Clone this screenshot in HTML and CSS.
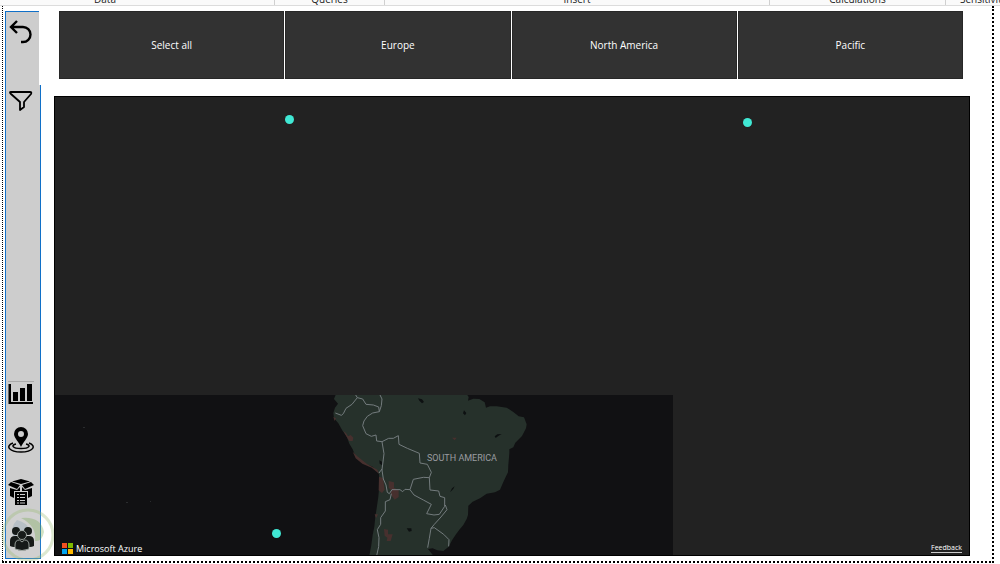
FILE: index.html
```html
<!DOCTYPE html>
<html lang="en">
  <head>
    <meta charset="UTF-8" />
    <meta name="viewport" content="width=device-width, initial-scale=1" />
    <title>Sales map report</title>
    <link rel="stylesheet" href="styles.css">
  </head>
  <body>
    <header class="ribbon">
      <span class="group group-data">Data</span>
      <span class="group">Queries</span>
      <span class="group">Insert</span>
      <span class="group">Calculations</span>
      <span class="group group-sens">Sensitivity</span>
    </header>

    <div class="report">
      <nav class="sidebar">
        <div class="side-top">
          <button class="icon-btn" aria-label="Back">
            <svg width="26" height="26" viewBox="0 0 26 26" fill="none" stroke="#000" stroke-width="2.4">
              <path d="M10 2 4 8l6 6M4 8h12a7 7 0 0 1 0 15h-2" />
            </svg>
          </button>
        </div>
        <div class="side-main">
          <button class="icon-btn" aria-label="Filters">
            <svg width="26" height="26" viewBox="0 0 26 26" fill="none" stroke="#000" stroke-width="1.8" stroke-linejoin="round">
              <path d="M4 4h19q2 0 1 2l-7 8v5l-4 3v-8L4 6Q2 4 4 4z" />
            </svg>
          </button>
          <div class="side-pages">
            <div class="side-group">
              <button class="icon-btn" aria-label="Charts">
                <svg width="26" height="26" viewBox="0 0 26 26">
                  <path d="M.5 3H3v18h22v2H.5zM5 11h5v9H5zM12 7h5v13h-5zM19 3h5v17h-5z" />
                </svg>
              </button>
              <button class="icon-btn" aria-label="Map">
                <svg width="26" height="26" viewBox="0 0 26 26">
                  <path fill-rule="evenodd" d="M13 0a7 7 0 0 1 7 7c0 4-5 8-7 13C11 15 6 11 6 7a7 7 0 0 1 7-7zm0 4a3 3 0 1 0 0 6 3 3 0 0 0 0-6z" />
                  <path fill="none" stroke="#000" stroke-width="1.5" d="M8 17c-5 1-4 4.500 5 4.500s10-3.500 5-4.500M5 16c-8 3-4 9 8 9s16-6 8-9" />
                </svg>
              </button>
            </div>
            <div class="side-group">
              <button class="icon-btn" aria-label="Products">
                <svg width="26" height="26" viewBox="0 0 26 26">
                  <path d="M13 0l9 2.500L13 5 4 2.500zM3 3l9 3-3 4L0 6zM23 3l-9 3 3 4 9-4zM2 9l7 2 3-3v4H6v7l-4-2zM24 9l-7 2-3-3v4h6v7l4-2z" />
                  <path d="M7 13h12v13H7z" />
                  <path stroke="#cdcdcd" d="M9 15.500h2M12 15.500h5M9 18.500h2M12 18.500h5M9 21.500h2M12 21.500h5M9 24h2M12 24h5" />
                </svg>
              </button>
              <button class="icon-btn" aria-label="Customers">
                <svg width="26" height="26" viewBox="0 0 26 26" fill="#161a18">
                  <circle cx="8" cy="6" r="4" />
                  <circle cx="20" cy="6" r="4" />
                  <path d="M2 21v-5q0-5 5-5h14q5 0 5 5v5q-2 1-4 1H6q-2 0-4-1z" />
                  <g stroke="#b4bcb6" stroke-width=".8">
                    <circle cx="14" cy="10" r="4.500" />
                    <path d="M7 24v-4q0-5 4.500-5l2.500 2 2.500-2q4.500 0 4.500 5v4q-7 3-14 0z" />
                  </g>
                </svg>
              </button>
            </div>
          </div>
        </div>
        <svg class="watermark" width="58" height="58" viewBox="0 0 58 58" aria-hidden="true">
          <circle cx="29" cy="29" r="25" fill="#fff" fill-opacity=".2" stroke="#9fbf7a" stroke-width="3" />
          <path fill="#7fae5a" d="M22 12q20-2 23 14-2 10-9 9 2-15-14-23z" />
          <path fill="#8fa6bb" d="M18 14q-8 8-3 18 6-8 16-8-4-8-13-10z" />
        </svg>
      </nav>

      <main class="content">
        <div class="slicer">
          <button class="tile">Select all</button>
          <button class="tile">Europe</button>
          <button class="tile">North America</button>
          <button class="tile">Pacific</button>
        </div>

        <section class="map">
          <svg class="land" width="618" height="160" viewBox="0 0 618 160">
            <rect width="618" height="160" fill="#111113" />
            <g transform="translate(265 -10) scale(.33333)">
              <path fill="#26312b" d="M48 27 42 42 54 56 45 68 40 84 42 100 55 115 68 138 80 154 88 176 98 193 104 208 120 226 140 238 158 245 168 256 177 268 178 300 175 335 170 370 166 395 163 425 158 450 154 480 148 512H340L324 492 338 490 352 496 370 498 386 485 396 466 408 448 418 434 430 420 440 402 444 390 445 362 458 350 480 340 500 326 525 322 540 314 549 293 557 276 564 262 565 240 568 205 568 193 580 187 586 173 606 153 618 130 620 118 612 97 596 94 580 81 560 68 530 64 510 64 498 68 494 52 478 42 460 41 444 47 446 36 440 27z" />
              <g fill="#47302e">
                <path d="M70 138l8 6 6 10 8-4 8 8-2 10-10 0-8-12zM98 200l14 14 28 22 32 18 5 12-22-18-28-12-20-16zM177 275l12 4 5 35-8 10-10-8zM206 288l16 4 0 16 14 8 0 20-12 8-12-16 2-12-8-8zM164 388l10 0-6 12zM192 432l12 2 0 14 14 0-6 20-12 0 2-10-8-6zM396 158l14 0-6 8zM40 96l8 4-4 8z" />
              </g>
              <g fill="#0d1011">
                <path d="M294 40l12 3 6 8-6 4-8-8zM432 76l7 8-4 7-6-6zM524 154l8-6 13-1-10 6-8 6zM404 304l-4 8-10 10 6-12zM260 430l14 0 1 8-8 2zM178 226l8 4 3 12-10-6z" />
              </g>
              <g fill="none" stroke="#737b7d" stroke-width="3" stroke-linejoin="round">
                <path d="M107 30 112 38 96 58 78 70 70 86 64 91 46 84M112 38 128 42 138 58 160 60 176 66 178 80 158 84 142 94 132 108 128 122 138 146 154 154 168 150 170 168 186 170M180 30 186 42 184 62 178 80" />
                <path d="M186 170 206 160 220 160 235 152 237 178 262 190 298 205 300 234 322 238 334 262 328 278 310 277 280 283 270 314 255 313 248 320 240 314 216 314 208 326 202 322 198 300 190 282 186 255 192 206 186 170M177 264 186 252" />
                <path d="M328 278 330 315 356 318 360 334 374 338 374 364 358 388 342 390 320 386 334 358 310 345 282 330 270 314M376 360l5 14-18 22-20 22-10 12-5 30-5 28M333 430l10-2 28 20 16 16-1 20M214 326 210 344 196 350 196 378 182 398 182 418 172 434 177 458 176 485 170 512" />
              </g>
            </g>
            <path fill="#2a2c2e" d="M28 32h2v1h-2zM71 107h2v1h-2zM95 106h1v1h-1z" />
            <text class="region" x="372" y="66">SOUTH AMERICA</text>
          </svg>
          <span class="dot dot-north-america"></span>
          <span class="dot dot-europe"></span>
          <span class="dot dot-pacific"></span>
          <footer class="map-footer">
            <span class="brand">
              <svg width="11" height="11" viewBox="0 0 11 11">
                <path fill="#f25022" d="M0 0h5v5H0z" />
                <path fill="#7fba00" d="M6 0h5v5H6z" />
                <path fill="#00a4ef" d="M0 6h5v5H0z" />
                <path fill="#ffb900" d="M6 6h5v5H6z" />
              </svg>
              Microsoft Azure
            </span>
            <a class="feedback" href="#">Feedback</a>
          </footer>
        </section>
      </main>
    </div>
  </body>
</html>
```

FILE: styles.css
```css
* {
  box-sizing: border-box;
}

body {
  font-family: "Open Sans", "Noto Sans", sans-serif;
  margin: 0;
  background: #fff;
  color: #222;
  height: 100vh;
  display: flex;
  flex-direction: column;
  overflow: hidden;
}

/* only the bottom edge of the ribbon is visible */
.ribbon {
  display: grid;
  grid-template-columns: 275fr 110fr 385fr 176fr 54fr;
  align-content: end;
  height: 6px;
  flex-shrink: 0;
  overflow: hidden;
  background: #fafafa;
  border-bottom: 1px solid #dcdcdc;
  font-size: 10px;
  line-height: 12px;
}

.group {
  min-width: 0;
  text-align: center;
  border-right: 1px solid #d0d0d0;
}

.group-data {
  padding-right: 64px;
}

.group-sens {
  padding-left: 14px;
  border-right: none;
  text-align: left;
}

.report {
  flex: 1;
  display: flex;
  gap: 13px;
  margin: 0 6px 1px 2px;
  padding: 5px 22px 2px 2px;
  border: 1px dotted #000;
  border-width: 0 2px 2px 1px;
}

.sidebar {
  width: 36px;
  display: flex;
  flex-direction: column;
  position: relative;
}

.side-top {
  height: 74px;
  margin-right: 2px;
  padding-top: 7px;
  background: #cdcdcd;
  border-top: 1px solid #1070c8;
  border-left: 1px solid #1070c8;
}

.side-main {
  flex: 1;
  display: flex;
  flex-direction: column;
  justify-content: space-between;
  background: #cdcdcd;
  border: 1px solid #1070c8;
  border-top: none;
}

.icon-btn {
  display: block;
  position: relative;
  z-index: 1;
  width: 26px;
  height: 26px;
  padding: 0;
  margin-left: 2px;
  border: none;
  background: none;
  cursor: pointer;
}

.side-top .icon-btn,
.side-main > .icon-btn {
  margin-left: 1px;
}

.side-main > .icon-btn {
  margin-top: 3px;
}

.side-pages {
  display: flex;
  flex-direction: column;
  gap: 26px;
  padding-bottom: 7px;
}

.side-group {
  display: flex;
  flex-direction: column;
  gap: 20px;
}

.side-group:first-child {
  background: linear-gradient(#aaa, #aaa) 2px 0 / 26px 1px no-repeat;
}

.watermark {
  position: absolute;
  left: -6px;
  bottom: -5px;
  opacity: 0.35;
  pointer-events: none;
}

.content {
  flex: 1;
  display: flex;
  flex-direction: column;
  gap: 17px;
  padding-bottom: 3px;
}

.slicer {
  display: flex;
  gap: 1px;
  height: 68px;
  margin: 0 7px 0 5px;
}

.tile {
  flex: 1;
  background: #323232;
  color: #fff;
  border: 1px solid #272727;
  padding: 0;
  font-family: inherit;
  font-size: 10px;
  font-weight: 500;
  cursor: pointer;
}

.tile:hover {
  background: #444;
}

.map {
  flex: 1;
  position: relative;
  background: #222;
  border: 1px solid #000;
  display: flex;
  flex-direction: column;
  justify-content: flex-end;
}

.land {
  position: absolute;
  left: 0;
  bottom: 0;
}

.region {
  font-family: Roboto, sans-serif;
  font-size: 9px;
  fill: #9a9ca0;
}

.dot {
  position: absolute;
  width: 9px;
  height: 9px;
  border-radius: 50%;
  background: #40e8d4;
}

.dot-north-america {
  left: 230px;
  top: 18px;
}

.dot-europe {
  left: 688px;
  top: 21px;
}

.dot-pacific {
  left: 217px;
  bottom: 17px;
}

.map-footer {
  position: relative;
  display: flex;
  justify-content: space-between;
  align-items: center;
  height: 14px;
  padding: 0 7px;
  color: #fff;
}

.brand {
  display: flex;
  align-items: center;
  gap: 3px;
  font-size: 9px;
  font-weight: 500;
}

.feedback {
  color: #fff;
  font-size: 7px;
  line-height: 8px;
  text-decoration: none;
  border-bottom: 1px solid #ccc;
}
```
